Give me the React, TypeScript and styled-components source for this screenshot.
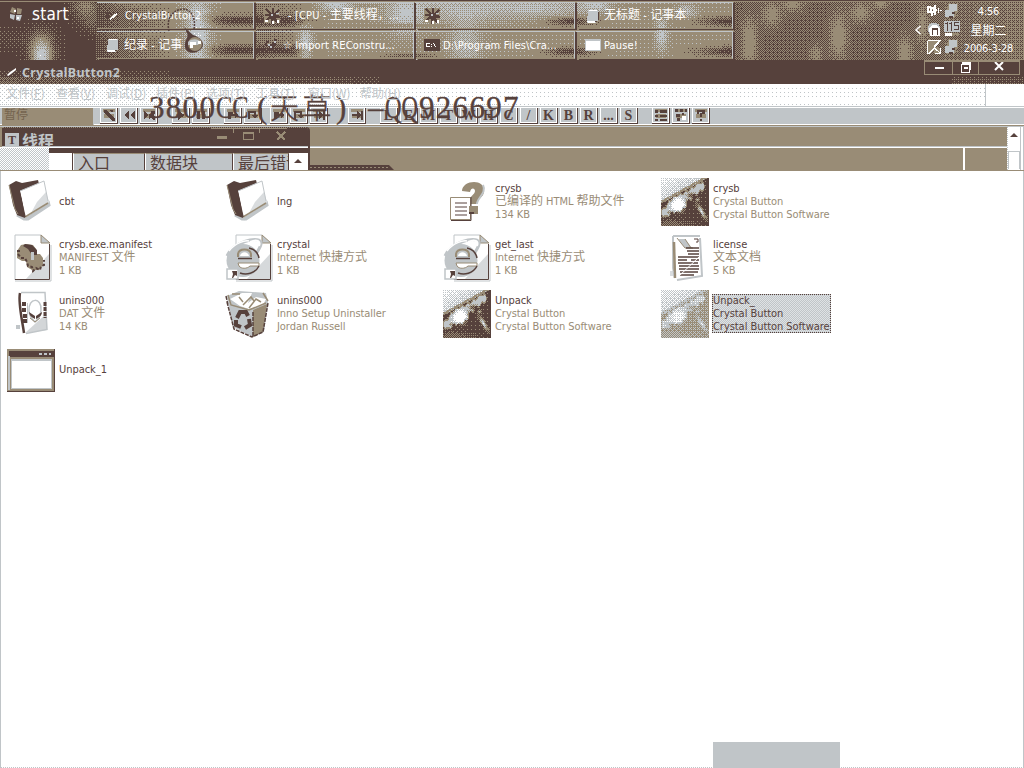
import React from "react";
import styled, { createGlobalStyle, css } from "styled-components";

const D = "#56413c";
const T = "#998c76";
const G = "#c0c5c8";
const W = "#ffffff";

const ui = `"DejaVu Sans Condensed", "Noto Sans CJK SC", "Liberation Sans", sans-serif`;
const song = `"Noto Sans CJK SC", "Liberation Sans", sans-serif`;

const Global = createGlobalStyle`
  * { box-sizing: border-box; }
  html, body { margin: 0; padding: 0; }
  body { width: 1024px; height: 768px; overflow: hidden; background: ${W}; color: ${D}; font: 11px/13px ${ui}; }
  svg { display: block; flex: none; }
`;

/* ---------- four-colour ordered dithering ---------- */

const BAYER = [
  [0, 8, 2, 10],
  [12, 4, 14, 6],
  [3, 11, 1, 9],
  [15, 7, 13, 5],
];

type Field = (x: number, y: number) => number;

function ditherPaths(w: number, h: number, f: Field) {
  const out = ["", "", "", ""];
  for (let y = 0; y < h; y++) {
    let start = 0;
    let prev = -1;
    for (let x = 0; x <= w; x++) {
      const level =
        x === w ? -1 : Math.max(0, Math.min(3, Math.floor(f(x, y) + (BAYER[y & 3][x & 3] + 0.5) / 16)));
      if (level !== prev) {
        if (prev >= 0) out[prev] += `M${start} ${y}h${x - start}v1h${start - x}z`;
        start = x;
        prev = level;
      }
    }
  }
  return out;
}

function Dither({ w, h, f }: { w: number; h: number; f: Field }) {
  const paths = React.useMemo(() => ditherPaths(w, h, f), [w, h, f]);
  return (
    <svg width={w} height={h} viewBox={`0 0 ${w} ${h}`} shapeRendering="crispEdges">
      {[D, T, G, W].map((c, i) => (
        <path key={c} d={paths[i]} fill={c} />
      ))}
    </svg>
  );
}

const blob = (x: number, y: number, cx: number, cy: number, rx: number, ry: number, a: number) =>
  a * Math.exp(-(((x - cx) / rx) ** 2) - ((y - cy) / ry) ** 2);

const wallpaper: Field = (x, y) => {
  if (y === 0) return 0.2;
  if (y === 1) return 1;
  if (x < 96) {
    return (
      0.02 + blob(x, y, 41, 50, 11, 17, 1.4) + blob(x, y, 41, 60, 9, 14, 0.9) +
      blob(x, y, 85, 6, 12, 12, 0.8) + blob(x, y, 92, 22, 9, 10, 0.35) + blob(x, y, 10, 38, 30, 9, 0.14)
    );
  }
  if (x < 734) {
    const row = y < 30 ? y : y - 30;
    let v = 1.05;
    if (x < 255) v = 0.22 + Math.min(0.8, (x - 96) / 100) + blob(x, row, 130, 4, 30, 5, 0.25);
    else if (x < 330) v = 0.72 + (x - 255) / 220;
    v += blob(x, y, 197, 35, 12, 40, 1.2);
    v += blob(x, y, 305, 43, 7, 18, 1);
    v += blob(x, y, 335, 4, 16, 7, 0.9);
    v += blob(x, y, 405, 16, 17, 20, 0.65);
    v += blob(x, y, 460, 8, 70, 13, 0.62);
    v += blob(x, y, 465, 45, 16, 26, 0.6);
    v += blob(x, y, 545, 7, 45, 9, 0.55);
    v += blob(x, y, 596, 5, 14, 6, 0.7);
    v += blob(x, y, 661, 34, 6, 15, 0.9);
    v += blob(x, y, 686, 11, 10, 7, 0.7);
    v -= blob(x, row, 240, 20, 34, 5, 0.95);
    v -= blob(x, row, 288, 20, 18, 5, 0.6);
    v -= blob(x, row, 410, 25, 26, 2, 0.5);
    v -= blob(x, row, 570, 21, 22, 4, 0.9);
    v -= blob(x, row, 738, 21, 36, 4.5, 1.1);
    return v;
  }
  const v =
    0.44 + Math.max(0, (x - 900) / 480) +
    blob(x, y, 749, 42, 7, 22, 0.8) + blob(x, y, 771, 14, 9, 11, 0.6) + blob(x, y, 792, 3, 10, 8, 0.6) +
    blob(x, y, 838, 36, 8, 22, 0.7) + blob(x, y, 860, 12, 10, 9, 0.6) + blob(x, y, 880, 2, 7, 6, 0.6) +
    blob(x, y, 904, 52, 7, 16, 0.6) + blob(x, y, 922, 24, 5, 18, 0.5) + blob(x, y, 816, 54, 6, 9, 0.5);
  return Math.min(v, 1);
};

const titleNoise: Field = (x, y) => {
  const fade = x < 380 ? 0.42 * (1 - x / 560) : x > 950 ? 0.2 : 0;
  return y > 16 ? fade : y > 10 && x < 170 ? 0.12 : 0;
};

const menuNoise: Field = (x, y) => {
  if (x > 984) return 3;
  if (y > 19) return x < 500 ? 2.8 : 2.95;
  return x < 290 ? 2.9 : y > 3 && y < 16 ? 2.95 : 3;
};

/* distance from a point to the glossy diagonal hull */
const hull = (x: number, y: number) => {
  const t = Math.max(0, Math.min(1, ((x - 4) * 35 + (y - 34) * -26) / (35 * 35 + 26 * 26)));
  return { t, d: Math.hypot(x - 4 - t * 35, y - 34 + t * 26) };
};
const photoAt = (x: number, y: number) => {
  const corner = x * 0.55 + y;
  const { t, d } = hull(x, y);
  const r = 3 + 3.5 * Math.exp(-(((t - 0.35) / 0.22) ** 2)) + 0.9 * Math.sin(x * 1.1);
  let v = corner < 22 ? 2.8 - corner / 40 : corner < 25 ? 1.1 : 0.04;
  if (d < r) v = 2;
  else if (d < r + 1.6) v = 1;
  v -= blob(x, y, 30, 17, 4, 2.5, 1.8) + blob(x, y, 10, 34, 4, 1.5, 1.6) + blob(x, y, 26, 24, 2, 4, 1.4);
  v += blob(x, y, 17, 27, 5.5, 5.5, 2.4);
  v += blob(x - (y - 33) * 0.6, y, 40, 33, 2, 6, 2.3) + blob(x, y, 36, 21, 2, 2, 1.2);
  v += blob(x, y, 8, 45, 12, 4, 0.5) + blob(x, y, 28, 45, 12, 3, 0.2);
  return Math.max(0, Math.min(3, v));
};
const photo: Field = (x, y) => photoAt(x, y);
const photoSelected: Field = (x, y) => 1.3 + photoAt(x, y) * 0.46;

/* ---------- mixed latin / chinese text ---------- */

const Cjk = styled.span`
  font-size: 12px;
  letter-spacing: 0;
`;
function Mixed({ children }: { children: string }) {
  return (
    <>
      {children.split(/([\u4e00-\u9fff]+)/).map((s, i) => (i % 2 ? <Cjk key={i}>{s}</Cjk> : s))}
    </>
  );
}

/* ---------- taskbar ---------- */

const Taskbar = styled.header`
  position: relative;
  display: flex;
  height: 60px;
  overflow: hidden;
  color: ${W};
`;
const Wallpaper = styled.div`
  position: absolute;
  inset: 0;
  z-index: 0;
`;
const Start = styled.div`
  z-index: 1;
  width: 97px;
  height: 28px;
  display: flex;
  align-items: center;
  gap: 9px;
  padding-left: 9px;
  font-size: 17px;
  letter-spacing: 0.25px;
`;
const Tasks = styled.div`
  z-index: 1;
  display: grid;
  grid-template-columns: 159px 160px 161px 158px;
  grid-template-rows: 27px 28px;
  row-gap: 2px;
  padding-top: 2px;
  width: 638px;
`;
const Task = styled.div`
  display: flex;
  align-items: center;
  gap: 3px;
  margin-right: 2px;
  padding-left: 8px;
  border-top: 1px solid ${G};
  border-bottom: 1px solid ${T};
  border-right: 1px solid ${G};
  box-shadow: 2px 1px 0 ${D};
  white-space: nowrap;
  letter-spacing: 0.14px;
`;
const TaskLabel = styled.span<{ $gap?: number }>`
  margin-left: ${(p) => p.$gap ?? 0}px;
`;
const Note = styled.div`
  position: absolute;
  z-index: 2;
  left: 166px;
  top: 7px;
`;
const Tray = styled.div`
  z-index: 1;
  flex: 1;
  display: flex;
  align-items: center;
  justify-content: flex-end;
  padding-right: 10px;
`;
const TrayIcons = styled.div`
  display: grid;
  grid-template-columns: 16px 16px;
  grid-template-rows: repeat(3, 16px);
  gap: 2px;
  margin: 0 3px 2px 4px;
`;
const Clock = styled.div`
  width: 51px;
  height: 60px;
  display: flex;
  flex-direction: column;
  justify-content: space-around;
  padding: 3px 0 3px;
  text-align: center;
  letter-spacing: -0.2px;
  white-space: nowrap;
`;
const Day = styled.span`
  font: 12px/14px ${song};
  letter-spacing: 0;
`;

function TaskIcon({ kind }: { kind: string }) {
  return (
    <svg width="16" height="16" viewBox="0 0 16 16" shapeRendering="crispEdges" overflow="visible">
      {kind === "feather" && (
        <>
          <path d="M1 4h5v2H4v5H1z" fill={D} />
          <path d="M4 11l3-3 5-3v2L8 10l-3 2z" fill={W} />
        </>
      )}
      {kind === "splat" && (
        <>
          <path d="M0 0h16v15H0z" fill={T} />
          <path d="M2 1l5 5M9 0v7M15 2l-5 5M10 8l6 1M9 9l5 6M8 9v7M7 8l-5 5M6 7L1 7" stroke={D} strokeWidth="2.500" />
          <path d="M5 5h7v6H5z" fill={D} />
          <path d="M1 12h3v2H1zM8 13h2v3H8zM13 12h2v3h-2z" fill={W} />
          <path d="M7 6h2v2H7zM12 5h3v1h-3z" fill={G} />
        </>
      )}
      {kind === "note" && (
        <>
          <path d="M3 2h10l1 10-4 3H2z" fill={G} />
          <path d="M4 2h8v1H4zM2 13h8v2H3z" fill={W} />
          <path d="M13 4h1v8h-1zM10 13h2v1h-2z" fill={D} />
        </>
      )}
      {kind === "wrench" && (
        <>
          <path d="M2 4h3v2H3v3H1zM9 2h4v2h-2zM5 9l5-4 2 2-5 6H5z" fill={D} />
          <path d="M4 7h2v2h2v2H6V9H4zM10 4h2v2h-2z" fill={G} />
        </>
      )}
      {kind === "cmd" && (
        <>
          <path d="M0 2h16v12H0z" fill={D} />
          <path d="M3 6h3v1H3v2h3v1H2V6zM7 7h1v1H7zM7 9h1v1H7zM9 6h1v1h1v2h1v1h-1V9h-1V7H9z" fill={W} />
        </>
      )}
      {kind === "window" && (
        <>
          <path d="M0 2h16v12H0z" fill={G} />
          <path d="M1 4h14v9H1z" fill={W} />
        </>
      )}
    </svg>
  );
}

function TrayIcon({ kind }: { kind: string }) {
  return (
    <svg width="16" height="16" viewBox="0 0 16 16" shapeRendering="crispEdges">
      {kind === "sound" && (
        <path d="M1 3h4v1h3v-2h2v4h1v2h-1v4H8v-2H7v3H5v-3H1zM12 5h1v5h-1zM14 7h2v1h-2zM3 5v3h1V5zM6 6v2h1V6z" fill={W} fillRule="evenodd" />
      )}
      {kind === "net" && (
        <>
          <path d="M4 1h10v7l-3 7H2z" fill={T} />
          <path d="M5 1h8v7H5zM1 7h9v7H1z" fill={G} />
          <path d="M8 9h3v2H8zM5 13h4v2H5z" fill={D} />
        </>
      )}
      {kind === "house" && (
        <>
          <circle cx="8" cy="8" r="6.5" fill={G} />
          <path d="M3 7l4-3h3l4 3v8H4z" fill={W} />
          <path d="M6 7h6v7h-1V9H7v5H6z" fill={D} />
        </>
      )}
      {kind === "115" && (
        <>
          <path d="M0 0h16v11H0z" fill={G} />
          <path d="M3 1h1v9H3zM1 2h2v1H1zM7 1h1v9H7zM5 2h2v1H5zM10 1h5v1h-4v2h4v5h-5V8h4V5h-4z" fill={D} />
          <path d="M1 12h7v3H1z" fill={W} />
          <path d="M8 12h7v2H8z" fill={T} />
        </>
      )}
      {kind === "kav" && (
        <>
          <path d="M1 1h14L9 7l6 3v5H9L7 11l-4 4H1z" fill={T} />
          <path d="M1.500 1.500H14L8 8M1.500 1.500v13h2L13 3M8 8l3 4M9 14.500h5.500V9M14 14l-3-3" fill="none" stroke={W} strokeWidth="1.300" />
        </>
      )}
    </svg>
  );
}

/* ---------- debugger window ---------- */

const TitleBar = styled.div`
  position: relative;
  height: 24px;
  display: flex;
  align-items: flex-start;
  background: ${D};
`;
const TitleContent = styled.div`
  z-index: 1;
  flex: 1;
  display: flex;
  align-items: center;
  height: 25px;
  padding-left: 5px;
  gap: 1px;
  color: ${G};
  letter-spacing: 0.3px;
  font: bold 12.5px/16px "Noto Sans", sans-serif;
`;
const WinButtons = styled.div`
  z-index: 1;
  display: grid;
  grid-template-columns: 28px 26px 40px;
  height: 15px;
  margin-right: 4px;
  border: 1px solid ${T};
  border-top: 2px solid ${T};
`;
const WinButton = styled.div`
  display: flex;
  align-items: flex-start;
  justify-content: center;
  border-right: 1px solid ${T};
  &:last-child { border-right: 0; }
`;
const MenuBar = styled.div`
  position: relative;
  height: 23px;
  display: flex;
  padding: 1px 0 0 6px;
  border-bottom: 1px solid ${G};
  color: ${G};
  font: 12px/15px ${song};
  white-space: nowrap;
`;
const MenuRest = styled.div`
  z-index: 1;
  width: 39px;
  margin: -1px 0 0 auto;
  background: ${W};
  border-left: 1px solid ${G};
`;
const MenuItem = styled.span<{ $wide?: boolean }>`
  z-index: 1;
  width: ${(p) => (p.$wide ? 52 : 50)}px;
`;
const ToolBar = styled.div`
  height: 19px;
  display: flex;
  align-items: stretch;
  padding-left: 2px;
  background: ${G};
  border-bottom: 1px solid ${T};
  border-top: 1px solid ${W};
  box-shadow: inset 0 -1px 0 ${W};
`;
const Status = styled.div`
  width: 92px;
  padding-left: 2px;
  background: ${T};
  border-right: 1px solid ${G};
  font: 12px/12px ${song};
  color: #75644f;
`;
const ToolGroup = styled.div<{ $before: number }>`
  display: flex;
  gap: 2px;
  margin-left: ${(p) => p.$before}px;
`;
const Tool = styled.div`
  width: 18px;
  height: 16px;
  display: flex;
  align-items: center;
  justify-content: center;
  background: ${G};
  border-right: 1px solid ${D};
  border-bottom: 1px solid ${D};
  box-shadow: inset 1px 0 0 ${W}, inset -1px -1px 0 ${W};
  font: bold 14px/14px "Liberation Serif", serif;
  color: ${D};
`;

function ToolGlyph({ kind }: { kind: string }) {
  const shapes: Record<string, string> = {
    open: "M2 1h2l9 9v2h-3L2 4zM7 1h4v2H9z",
    rewind: "M7 2v8L2 6zM13 2v8L8 6z",
    close: "M2 2l4 4-4 4zM7 5h2V2h4v3l-2 1 2 2v3h-2L9 8 7 10z",
    play: "M4 2l7 4-7 5z",
    pause: "M3 2h3v8H3zM8 2h3v8H8z",
    step: "M2 3h5v2h2V2l3 4-3 4V7H5v3H2z",
    over: "M2 2h8v4h2l-3 4-3-4h2V4H4v6H2z",
    till: "M2 5h5V2l4 4-4 4V7H2zM11 2h2v9h-2z",
    list: "M1 1h3v3H1zM6 1h7v3H6zM1 6h3v2H1zM6 6h7v2H6zM1 10h3v2H1zM6 10h7v2H6z",
    grid: "M1 0h3v3H1zM6 0h3v3H6zM11 0h2v3h-2zM2 5h4v3H2zM8 4h2v2H8zM3 9h3v3H3z",
    help: "M3 1h8v4H8v3H6V4h2V3H5v2H3zM6 10h2v2H6z",
  };
  return (
    <svg width="14" height="13" viewBox="0 0 14 13" shapeRendering="crispEdges">
      {kind !== "rewind" && <path d="M1 0h12v3H1zM2 5h10v4H2z" fill={T} />}
      <path d={shapes[kind]} fill={D} />
      {kind === "grid" && <path d="M8 7h4v4H8z" fill={W} />}
    </svg>
  );
}

const Mdi = styled.div`
  height: 45px;
  display: flex;
  background: ${T};
  border-top: 1px solid ${G};
  border-bottom: 1px solid ${T};
  overflow: hidden;
`;
const MdiLeft = styled.div`
  width: 310px;
  border-right: 2px solid ${D};
  border-top-right-radius: 4px;
  overflow: hidden;
`;
const ThreadTitle = styled.div`
  height: 20px;
  margin-left: 2px;
  display: flex;
  align-items: flex-start;
  padding: 4px 20px 0 3px;
  gap: 3px;
  background: ${D};
  border-top: 1px dotted ${T};
  border-bottom: 1px solid ${G};
  color: ${G};
  font: bold 16px/16px ${song};
  overflow: hidden;
`;
const ThreadIcon = styled.span`
  width: 14px;
  height: 14px;
  margin-top: 1px;
  background: ${G};
  color: ${D};
  font: bold 12px/14px "Liberation Serif", serif;
  text-align: center;
`;
const ThreadButtons = styled.div`
  margin: -4px 1px 0 auto;
`;
const ThreadBody = styled.div`
  display: flex;
  height: 24px;
  border-top: 1px solid ${W};
`;
const Shade = styled.div`
  width: 49px;
  background: repeating-conic-gradient(${G} 0 25%, ${W} 0 50%) 0 0 / 2px 2px;
`;
const HeaderArea = styled.div`
  flex: 1;
  border-top: 5px solid ${D};
  background: ${W};
  display: grid;
  grid-template-columns: 24px 72px 88px 56px 18px;
  overflow: hidden;
`;
const HeaderCell = styled.div<{ $filled?: boolean }>`
  padding-left: 4px;
  border-right: 1px solid ${D};
  font: 16px/17px ${song};
  white-space: nowrap;
  overflow: hidden;
  ${(p) => p.$filled && css`background: ${G}; border-left: 1px solid ${W}; border-top: 1px solid ${T};`}
`;
const MdiRight = styled.div`
  flex: 1;
  display: flex;
  flex-direction: column;
`;
const MdiTop = styled.div`
  height: 21px;
  border-bottom: 1px solid ${W};
  box-shadow: inset 0 -1px 0 ${G};
`;
const MdiBottom = styled.div`
  flex: 1;
  display: flex;
  justify-content: space-between;
  align-items: flex-end;
  padding-right: 42px;
`;
const Splitter = styled.div`
  width: 2px;
  height: 22px;
  background: ${W};
`;
const Scroll = styled.div`
  width: 17px;
  display: flex;
  flex-direction: column;
  align-items: center;
  background: ${W};
  border-left: 1px dotted ${G};
  border-right: 4px double ${G};
`;
const Thumb = styled.div`
  width: 12px;
  height: 18px;
  margin-top: 12px;
  border: 1px solid ${G};
  border-bottom: 0;
`;

/* ---------- watermark ---------- */

const Watermark = styled.div`
  position: absolute;
  left: 149px;
  top: 91px;
  display: flex;
  font: 31px/34px "Liberation Serif", "Noto Sans CJK SC", serif;
  color: ${D};
  -webkit-text-stroke: 0.35px ${D};
  white-space: pre;
`;
const Stretch = styled.span<{ $w: number; $sx?: number; $ls?: number; $pad?: number }>`
  display: block;
  width: ${(p) => p.$w}px;
  padding-left: ${(p) => p.$pad ?? 0}px;
  letter-spacing: ${(p) => p.$ls ?? 0}px;
  transform: scaleX(${(p) => p.$sx ?? 1});
  transform-origin: 0 0;
`;
const Han = styled(Stretch)`
  font: 300 29px/30px ${song};
`;

/* ---------- file list ---------- */

const Explorer = styled.main`
  height: 597px;
  display: flex;
  flex-direction: column;
  justify-content: space-between;
  background: ${W};
  border-left: 1px solid ${G};
  border-right: 1px solid ${G};
  border-bottom: 1px dotted ${G};
`;
const Files = styled.div`
  display: grid;
  grid-template-columns: repeat(4, 218px);
  grid-auto-rows: 56px;
  padding: 7px 0 0 6px;
`;
const File = styled.div`
  display: flex;
  height: 48px;
  align-items: center;
  gap: 3px;
`;
const FileText = styled.div<{ $selected?: boolean }>`
  display: flex;
  flex-direction: column;
  margin-top: -1px;
  padding: 0 1px;
  white-space: nowrap;
  letter-spacing: -0.05px;
  color: ${T};
  ${(p) =>
    p.$selected &&
    css`
      color: ${D};
      outline: 1px dotted ${D};
      outline-offset: -1px;
      background: repeating-conic-gradient(${G} 0 25%, #dfe2e4 0 50%) 0 0 / 2px 2px;
    `}
`;
const Name = styled.span`
  color: ${D};
`;
const Line = styled.span`
  height: 13px;
`;
const Block = styled.div`
  width: 127px;
  height: 26px;
  margin: 0 0 -1px 712px;
  background: ${G};
`;

function Folder() {
  return (
    <svg width="48" height="48" viewBox="0 0 48 48">
      <path d="M10 37l9 4 21-13 1-5 1 4-21 14-4 0z" fill={G} stroke={G} strokeWidth="3" />
      <path d="M2 7l7-4 6 2 16-3 1 4-18 8 4 26-8-3-4-10z" fill={D} />
      <path d="M2 7l6 24 3 5" stroke={T} fill="none" />
      <path d="M13 13L37 3l5 21-23 14z" fill={W} />
      <path d="M30 24L39 14l3 10-18 11z" fill={G} opacity=".6" />
      <path d="M13 13L37 3l4 20" fill="none" stroke={G} strokeWidth="1" />
      <path d="M18 39l23-14" stroke={T} strokeWidth="1.500" />
      <path d="M12 13l6 26" stroke={D} strokeWidth="1.500" />
    </svg>
  );
}

function Page({ children }: { children?: React.ReactNode }) {
  return (
    <>
      <path d="M8 1h26l9 9v36H8z" fill={W} />
      <path d="M18 46L42 20v26z" fill={G} opacity=".65" />
      <path d="M8 46V1h26" fill="none" stroke={G} />
      <path d="M34 1v8h9z" fill={G} stroke={T} />
      <path d="M8 45.500h34.500V10" fill="none" stroke={D} />
      <path d="M8 47h36V11" fill="none" stroke={G} />
      {children}
    </>
  );
}

function Manifest() {
  return (
    <svg width="48" height="48" viewBox="0 0 48 48">
      <Page>
        <path d="M10 17l4-6 5-1 7 1 3 4-1 5 5 0 3 4 0 7-4 5-7 0-5-3-1-6-4 0-5-3z" fill={T} />
        <path d="M18 10l7 1 5 5 0 5-5 0-4-6-5-3z" fill={D} />
        <path d="M11 20l3 4 4 0 2 4 1 4 4 1 1 4 3-3 4 2 1-4 3-1 0-5M10 17h4" fill="none" stroke={D} strokeWidth="2" strokeDasharray="3 2" />
        <path d="M24 18h3v8h-3z" fill={G} />
      </Page>
    </svg>
  );
}

function Ie() {
  return (
    <svg width="48" height="48" viewBox="0 0 48 48">
      <g transform="translate(3 0)">
        <Page />
      </g>
      <circle cx="18" cy="26.5" r="16.500" fill={G} />
      <path d="M2 22C8 9 32 1 36 8c1 4-3 8-5 12" fill="none" stroke={G} strokeWidth="3" />
      <path d="M4 17C10 9 20 6 24 7" fill="none" stroke={W} strokeWidth="1.500" />
      <path d="M25 8c7-3 11-1 9 4" fill="none" stroke={W} strokeWidth="2" />
      <path d="M13 23v-3c1-6 12-6 13 0v3" fill={G} stroke={T} strokeWidth="2" />
      <path d="M15 22c1-5 8-5 9 0z" fill={W} />
      <path d="M13 24.500h14" stroke={D} strokeWidth="1.500" />
      <path d="M13 29h21v3l-9 0c-3 3-9 3-11 0z" fill={W} stroke={T} />
      <path d="M34 24c-1-5-5-9-10-10M34 32c-4 8-13 9-19 7" fill="none" stroke={D} strokeWidth="1.500" />
      <path d="M2 35h11v10H2z" fill={W} stroke={G} strokeWidth="1.500" />
      <path d="M7 37h5v5l-2-1-2 3H7l1-4z" fill={D} />
    </svg>
  );
}

function Help() {
  return (
    <svg width="48" height="48" viewBox="0 0 48 48">
      <path d="M19 13c0-11 23-13 22 0 0 7-7 7-7 13h-8c0-9 6-9 6-13 0-3-4-4-5 1z" fill={T} />
      <path d="M40 7c4 8-6 13-6 19" fill="none" stroke={G} strokeWidth="2" />
      <path d="M7.500 19.500h20v22h-20z" fill={W} stroke={T} />
      <path d="M28 19v23.500H8" fill="none" stroke={D} />
      <path d="M12 25h12M12 29h12M12 33h12M12 37h12" stroke={D} />
      <path d="M26 28h9v8h-9z" fill={T} />
      <path d="M26 34h5v2h-5z" fill={D} />
    </svg>
  );
}

function Bin() {
  return (
    <svg width="48" height="48" viewBox="0 0 48 48">
      <path d="M2 6l12-5 27 2 2 10-4 29-11 5-20-10z" fill={G} />
      <path d="M28 20l14-6-4 28-10 5z" fill={T} />
      <path d="M5 9l12-6 10 0-4 10 8-6 10 2-3 6-14 4-9-3z" fill={W} />
      <path d="M18 15l8-8 3 4M24 18l7-9 5 3M3 5l3 10 18 5 17-7M7 4h8M38 3l5 8M14 7l4 5" fill="none" stroke={T} strokeWidth="1.500" />
      <path d="M2 12l7 27 18 8 11-5 5-29M1 6l2 9M28 22v24" fill="none" stroke={D} strokeWidth="1.500" strokeDasharray="4 1" />
      <path d="M12 28l3-6h6l2 4M24 29l1 6-5 3M16 37l-5-2 0-5" fill="none" stroke={D} strokeWidth="4" />
    </svg>
  );
}

function TextDoc() {
  return (
    <svg width="48" height="48" viewBox="0 0 48 48">
      <path d="M12 3l27 1 2 38-25 3-4-2z" fill={W} />
      <path d="M12 2v32l2 10M12 2h27M39 4l2 38-25 4" fill="none" stroke={G} strokeWidth="2" />
      <path d="M13 8l1 36" stroke={T} strokeWidth="2.500" />
      <path d="M17 5l7 0 7 9-7 0z" fill={G} />
      <path d="M16 4l8 10h8M24 5l6 9" fill="none" stroke={T} strokeWidth="1" />
      <path d="M25 14h13M26 17h12M27 20h11M17 23h21M17 26h9M30 26h8M17 29h20M18 32h20M18 35h20M19 38h18M19 41h14" stroke={D} strokeWidth="1.300" />
      <path d="M33 5h4v3h-2" stroke={D} fill="none" />
      <path d="M17 43l21-20" stroke={W} strokeWidth="1" />
      <path d="M9 37h4v5H9z" fill={G} opacity=".6" />
    </svg>
  );
}

function Dat() {
  return (
    <svg width="48" height="48" viewBox="0 0 48 48">
      <path d="M14 3h24l2 37-20 3-5-1z" fill={W} />
      <path d="M18 43l22-20v17z" fill={G} opacity=".7" />
      <path d="M14 2.500h24l2 37-21 4" fill="none" stroke={G} strokeWidth="1.500" />
      <path d="M13 3c-2 10 2 26 4 40" stroke={D} strokeWidth="2.500" fill="none" />
      <path d="M15 14h4M15 20h4M16 26h4M16 31h4" stroke={D} strokeWidth="4" fill="none" />
      <path d="M20.500 13v20" stroke={G} />
      <path d="M38 12v16" stroke={D} strokeWidth="3" strokeDasharray="4 1" />
      <path d="M22 21c-1-14 13-14 12-1 0 6-3 9-6 12-3-3-6-6-6-11z" fill={W} stroke={G} strokeWidth="1.500" />
      <path d="M22 22l6 4v3c-4-2-6-4-6-7zM35 22l-6 4v3c4-2 6-4 6-7z" fill={D} />
      <path d="M23 28l5 4 5-4" fill="none" stroke={T} />
      <path d="M9 35h4v4H9z" fill={G} />
    </svg>
  );
}

function AppWindow() {
  return (
    <svg width="48" height="48" viewBox="0 0 48 48" shapeRendering="crispEdges">
      <path d="M0 3h48v43H0z" fill={T} />
      <path d="M2 5h45v6H2z" fill={D} />
      <path d="M1 10h2v34H1zM4 13h41v30H4z" fill={G} />
      <path d="M3 11h43v2H3z" fill={T} />
      <path d="M5 15h39v27H5z" fill={W} />
      <path d="M47 3h1v43h-1zM0 45h48v1H0z" fill={D} />
      <path d="M32 7h3v2h-3zM37 7h3v2h-3zM42 7h2v2h-2z" fill={G} />
    </svg>
  );
}

const icons: Record<string, () => React.ReactElement> = {
  folder: Folder,
  manifest: Manifest,
  ie: Ie,
  help: Help,
  bin: Bin,
  text: TextDoc,
  dat: Dat,
  app: AppWindow,
  photo: () => <Dither w={48} h={48} f={photo} />,
  photoSelected: () => <Dither w={48} h={48} f={photoSelected} />,
};

const files: { icon: string; name: string; info?: string[]; selected?: boolean }[] = [
  { icon: "folder", name: "cbt" },
  { icon: "folder", name: "lng" },
  { icon: "help", name: "crysb", info: ["已编译的 HTML 帮助文件", "134 KB"] },
  { icon: "photo", name: "crysb", info: ["Crystal Button", "Crystal Button Software"] },
  { icon: "manifest", name: "crysb.exe.manifest", info: ["MANIFEST 文件", "1 KB"] },
  { icon: "ie", name: "crystal", info: ["Internet 快捷方式", "1 KB"] },
  { icon: "ie", name: "get_last", info: ["Internet 快捷方式", "1 KB"] },
  { icon: "text", name: "license", info: ["文本文档", "5 KB"] },
  { icon: "dat", name: "unins000", info: ["DAT 文件", "14 KB"] },
  { icon: "bin", name: "unins000", info: ["Inno Setup Uninstaller", "Jordan Russell"] },
  { icon: "photo", name: "Unpack", info: ["Crystal Button", "Crystal Button Software"] },
  { icon: "photoSelected", name: "Unpack_", info: ["Crystal Button", "Crystal Button Software"], selected: true },
  { icon: "app", name: "Unpack_1" },
];

const tasks: [string, string, number?][] = [
  ["feather", "CrystalButton2", 1],
  ["splat", "- [CPU - 主要线程，...", 5],
  ["splat", ""],
  ["note", "无标题 - 记事本"],
  ["note", "纪录 - 记事"],
  ["wrench", "☆ Import REConstru..."],
  ["cmd", "D:\\Program Files\\Cra..."],
  ["window", "Pause!"],
];

const toolGroups: { before: number; items: string[] }[] = [
  { before: 6, items: ["open", "rewind", "close"] },
  { before: 14, items: ["play", "pause"] },
  { before: 14, items: ["step", "over"] },
  { before: 8, items: ["step", "over", "till"] },
  { before: 20, items: ["till"] },
  { before: 14, items: ["L", "E", "M", "T", "W", "H", "C", "/", "K", "B", "R", "...", "S"] },
  { before: 14, items: ["list", "grid", "help"] },
];

const menus = ["文件(F)", "查看(V)", "调试(D)", "插件(P)", "选项(T)", "工具(T)", "窗口(W)", "帮助(H)"];

export default function App() {
  return (
    <>
      <Global />
      <Taskbar>
        <Wallpaper>
          <Dither w={1024} h={60} f={wallpaper} />
        </Wallpaper>
        <Start>
          <svg width="14" height="16" viewBox="0 0 14 16">
            <path d="M3 1l4 2-1 5-5-2zM8 2l5 1-1 5-4 0z" fill={T} />
            <path d="M1 8l5 1-1 5-4-2zM7 9l6 0-2 6-4-1z" fill={G} />
            <path d="M5 4h2v2H5zM8 11h2v2H8z" fill={W} />
          </svg>
          start
        </Start>
        <Tasks>
          {tasks.map(([icon, label, gap]) => (
            <Task key={icon + label}>
              <TaskIcon kind={icon} />
              <TaskLabel $gap={gap}>
                <Mixed>{label}</Mixed>
              </TaskLabel>
            </Task>
          ))}
        </Tasks>
        <Tray>
          <svg width="8" height="10" viewBox="0 0 8 10">
            <path d="M6.500 1L2 5l4.500 4" fill="none" stroke={W} strokeWidth="1.500" />
          </svg>
          <TrayIcons>
            {["sound", "net", "house", "115", "kav", "net"].map((k, i) => (
              <TrayIcon key={i} kind={k} />
            ))}
          </TrayIcons>
          <Clock>
            <span>4:56</span>
            <Day>星期二</Day>
            <span>2006-3-28</span>
          </Clock>
        </Tray>
        <Note>
          <svg width="42" height="50" viewBox="0 0 42 50">
            <path d="M3 24C0 12 6 3 17 2c8 0 13 9 11 20" fill="none" stroke={D} strokeWidth="1.500" strokeDasharray="2 1" />
            <path d="M18 20l9 8c8 2 12 8 9 13-5 7-16 6-17-1-1-7 4-9 2-14z" fill={D} />
            <circle cx="29" cy="37" r="7" fill={T} />
            <path d="M22 35c4-4 11-3 12 0l-2 3H22z" fill={G} />
            <path d="M24 35h6v3h-3v3h-3zM32 34h3v3h-3z" fill={W} />
          </svg>
        </Note>
      </Taskbar>

      <TitleBar>
        <Wallpaper>
          <Dither w={1024} h={24} f={titleNoise} />
        </Wallpaper>
        <TitleContent>
          <svg width="16" height="16" viewBox="0 0 16 16">
            <path d="M2 10l3-3 6-4v2l-5 4-3 2z" fill={W} />
          </svg>
          CrystalButton2
        </TitleContent>
        <WinButtons>
          <WinButton>
            <svg width="10" height="8" viewBox="0 0 10 8"><path d="M1 5h9v2H1z" fill={W} /></svg>
          </WinButton>
          <WinButton>
            <svg width="12" height="11" viewBox="0 0 12 11" shapeRendering="crispEdges">
              <path d="M2 0h9v8H2z" fill={W} /><path d="M1 2h8v8H1z" fill={D} stroke={W} /><path d="M4 5h4v2H4z" fill={W} />
            </svg>
          </WinButton>
          <WinButton>
            <svg width="10" height="9" viewBox="0 0 10 9"><path d="M1 0l8 8M9 0L1 8" stroke={W} strokeWidth="2" /></svg>
          </WinButton>
        </WinButtons>
      </TitleBar>

      <MenuBar>
        <Wallpaper>
          <Dither w={1024} h={22} f={menuNoise} />
        </Wallpaper>
        {menus.map((m, i) => (
          <MenuItem key={m} $wide={i > 4}>
            {m.slice(0, 3)}
            <u>{m[3]}</u>)
          </MenuItem>
        ))}
        <MenuRest />
      </MenuBar>
      <ToolBar>
        <Status>暂停</Status>
        {toolGroups.map((g, i) => (
          <ToolGroup key={i} $before={g.before}>
            {g.items.map((it) => (
              <Tool key={it}>{it.length === 1 || it === "..." ? it : <ToolGlyph kind={it} />}</Tool>
            ))}
          </ToolGroup>
        ))}
      </ToolBar>
      <Mdi>
        <MdiLeft>
          <ThreadTitle>
            <ThreadIcon>T</ThreadIcon>
            线程
            <ThreadButtons>
              <svg width="76" height="17" viewBox="0 0 76 17" shapeRendering="crispEdges">
                <path d="M0 0h76v1H0zM22 1h1v4h-1zM48 1h1v4h-1z" fill={T} />
                <path d="M6 8h10v3H6zM32 4h11v8H32z" fill={T} />
                <path d="M33 6h9v5h-9z" fill={D} />
                <path d="M66 4l8 8M74 4l-8 8" stroke={T} strokeWidth="2" />
              </svg>
            </ThreadButtons>
          </ThreadTitle>
          <ThreadBody>
            <Shade />
            <HeaderArea>
              <HeaderCell />
              <HeaderCell $filled>入口</HeaderCell>
              <HeaderCell $filled>数据块</HeaderCell>
              <HeaderCell $filled>最后错误</HeaderCell>
              <svg width="18" height="17" viewBox="0 0 18 17">
                <path d="M5 10l4-4 4 4z" fill={D} />
              </svg>
            </HeaderArea>
          </ThreadBody>
        </MdiLeft>
        <MdiRight>
          <MdiTop />
          <MdiBottom>
            <svg width="84" height="6" viewBox="0 0 84 6">
              <path d="M0 1h79l5 5H0z" fill={D} />
              <path d="M0 3.500h80" stroke={T} strokeDasharray="2 2" />
            </svg>
            <Splitter />
          </MdiBottom>
        </MdiRight>
        <Scroll>
          <svg width="12" height="12" viewBox="0 0 12 12"><path d="M2 10l4-4 4 4z" fill={D} /></svg>
          <Thumb />
        </Scroll>
      </Mdi>

      <Explorer>
        <Files>
          {files.map((f, i) => {
            const Icon = icons[f.icon];
            return (
              <File key={i}>
                <Icon />
                <FileText $selected={f.selected}>
                  <Name>{f.name}</Name>
                  {f.info?.map((t) => (
                    <Line key={t}>
                      <Mixed>{t}</Mixed>
                    </Line>
                  ))}
                </FileText>
              </File>
            );
          })}
        </Files>
        <Block />
      </Explorer>

      <Watermark>
        <Stretch $w={67} $ls={1.3}>3800</Stretch>
        <Stretch $w={34} $sx={0.79}>CC</Stretch>
        <Stretch $w={17} $pad={7}>(</Stretch>
        <Han $w={69} $ls={3.5} $pad={3}>天草</Han>
        <Stretch $w={32}>)</Stretch>
        <Stretch $w={17} $sx={0.5}>—</Stretch>
        <Stretch $w={34} $sx={0.74}>QQ</Stretch>
        <Stretch $w={101} $ls={1.3}>926697</Stretch>
      </Watermark>
    </>
  );
}
